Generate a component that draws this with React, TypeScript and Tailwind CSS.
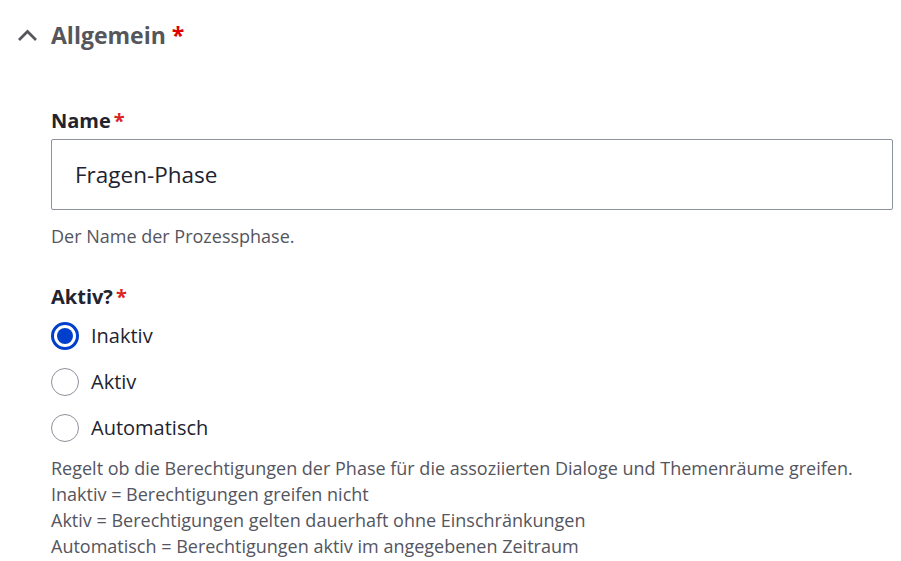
import { useState } from "react";

const options = ["Inaktiv", "Aktiv", "Automatisch"];

function Radio({ checked }: { checked: boolean }) {
  return checked ? (
    <span className="flex h-[28px] w-[28px] shrink-0 items-center justify-center rounded-full border-[3px] border-[#003ecc] bg-white">
      <span className="h-[16px] w-[16px] rounded-full bg-[#003ecc]" />
    </span>
  ) : (
    <span className="h-[28px] w-[28px] shrink-0 rounded-full border border-[#8e929c] bg-white" />
  );
}

export default function App() {
  const [value, setValue] = useState("Inaktiv");
  const [name, setName] = useState("Fragen-Phase");

  return (
    <div className="min-h-[561px] bg-white font-['Open_Sans',sans-serif] text-[#222330]">
      <div className="flex h-[71px] items-center pl-[17px]">
        <svg width="21" height="13" viewBox="0 0 21 13" className="shrink-0">
          <path d="M2 11 L10.5 2.5 L19 11" fill="none" stroke="#55565b" strokeWidth="2.7" />
        </svg>
        <h2 className="ml-[13px] text-[23px] font-bold text-[#55565b]">
          Allgemein <span className="text-[#e00000]">*</span>
        </h2>
      </div>

      <div className="pl-[51px] pr-[8px] pt-[36px]">
        <label className="block text-[20px] leading-[28px] font-bold">
          Name<span className="ml-[3px] text-[#dc2323]">*</span>
        </label>
        <input
          value={name}
          onChange={(e) => setName(e.target.value)}
          className="mt-[4px] block h-[71px] w-full rounded-[2px] border border-[#8e929c] px-[23px] text-[22.5px] text-[#222330] outline-none"
        />
        <p className="mt-[13px] text-[18px] leading-[26px] text-[#545560]">Der Name der Prozessphase.</p>

        <div className="mt-[34px] text-[20px] leading-[28px] font-bold">
          Aktiv?<span className="ml-[3px] text-[#dc2323]">*</span>
        </div>
        <div className="mt-[11px] flex flex-col gap-[18px]">
          {options.map((o) => (
            <label key={o} className="flex h-[28px] cursor-pointer items-center gap-[12px]" onClick={() => setValue(o)}>
              <Radio checked={value === o} />
              <span className="text-[20px]">{o}</span>
            </label>
          ))}
        </div>
        <div className="mt-[13px] text-[18px] leading-[26px] text-[#545560]">
          <div>Regelt ob die Berechtigungen der Phase für die assoziierten Dialoge und Themenräume greifen.</div>
          <div>Inaktiv = Berechtigungen greifen nicht</div>
          <div>Aktiv = Berechtigungen gelten dauerhaft ohne Einschränkungen</div>
          <div>Automatisch = Berechtigungen aktiv im angegebenen Zeitraum</div>
        </div>
      </div>
    </div>
  );
}
